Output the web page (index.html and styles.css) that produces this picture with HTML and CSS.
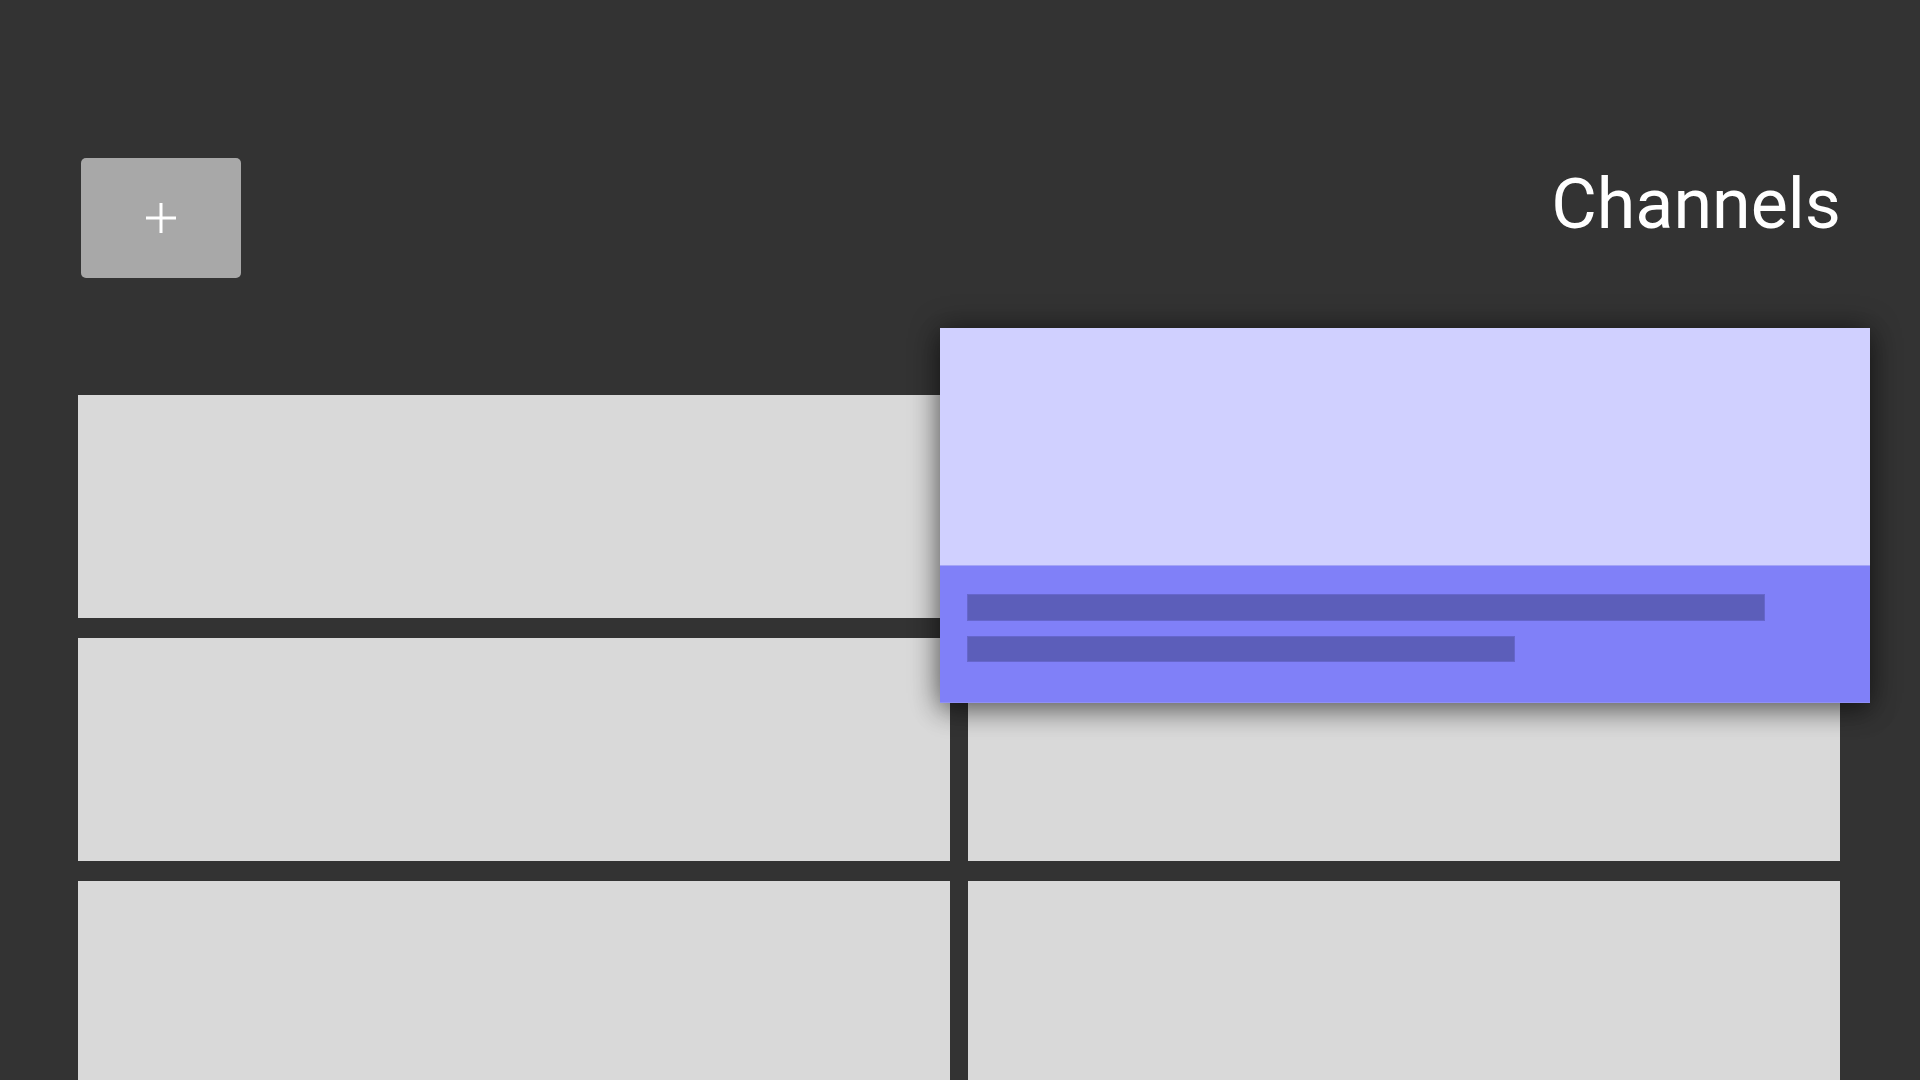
FILE: index.html
```html
<!DOCTYPE html>
<html lang="en">
<head>
<meta charset="utf-8">
<title>Channels</title>
<link rel="stylesheet" href="styles.css">
</head>
<body>
<div class="page">
  <header class="header">
    <button class="add-btn" aria-label="Add">
      <svg width="30" height="30" viewBox="0 0 30 30"><rect x="13.5" y="0" width="3" height="30" fill="#fff"/><rect x="0" y="13.5" width="30" height="3" fill="#fff"/></svg>
    </button>
    <h1 class="title">Channels</h1>
  </header>
  <main class="grid">
    <div class="tile"></div>
    <div class="tile tile-focus">
      <div class="focus-card">
        <div class="focus-image"></div>
        <div class="focus-info">
          <div class="bar bar-long"></div>
          <div class="bar bar-short"></div>
        </div>
      </div>
    </div>
    <div class="tile"></div>
    <div class="tile"></div>
    <div class="tile"></div>
    <div class="tile"></div>
  </main>
</div>
</body>
</html>
```
FILE: styles.css
```css
html, body {
  margin: 0;
  padding: 0;
  background: #333333;
  width: 1920px;
  height: 1080px;
  overflow: hidden;
}

.page {
  font-family: Roboto, "Noto Sans", sans-serif;
}

.header {
  display: flex;
  justify-content: space-between;
  align-items: flex-start;
  padding: 158px 79px 0 81px;
}

.add-btn {
  width: 160px;
  height: 120px;
  border: none;
  border-radius: 5px;
  background: #a8a8a8;
  display: flex;
  align-items: center;
  justify-content: center;
  padding: 0;
}

.add-btn svg {
  display: block;
}

.title {
  margin: 11px 0 0 0;
  font-size: 70px;
  line-height: 1;
  font-weight: 400;
  color: #ffffff;
}

.grid {
  display: grid;
  grid-template-columns: 872px 872px;
  grid-auto-rows: 223px;
  column-gap: 18px;
  row-gap: 20px;
  margin: 117px 0 0 78px;
}

.tile {
  background: #d9d9d9;
}

.tile-focus {
  position: relative;
}

.focus-card {
  position: absolute;
  left: -28px;
  top: -67px;
  width: 930px;
  height: 375px;
  display: flex;
  flex-direction: column;
  box-shadow: 0 0 28px rgba(0, 0, 0, 0.45), 0 10px 24px rgba(0, 0, 0, 0.3);
  z-index: 2;
}

.focus-image {
  height: 237px;
  background: #d0d0ff;
}

.focus-info {
  flex: 1;
  background: #8080f8;
  border-top: 1px solid #a4a4f6;
  border-bottom: 1px solid #9090f6;
  padding: 28px 0 0 27px;
  display: flex;
  flex-direction: column;
  gap: 15px;
}

.bar {
  background: #5c5eba;
  box-shadow: inset 0 0 0 1px #6666cc;
}

.bar-long {
  width: 798px;
  height: 27px;
}

.bar-short {
  width: 548px;
  height: 26px;
}
```
